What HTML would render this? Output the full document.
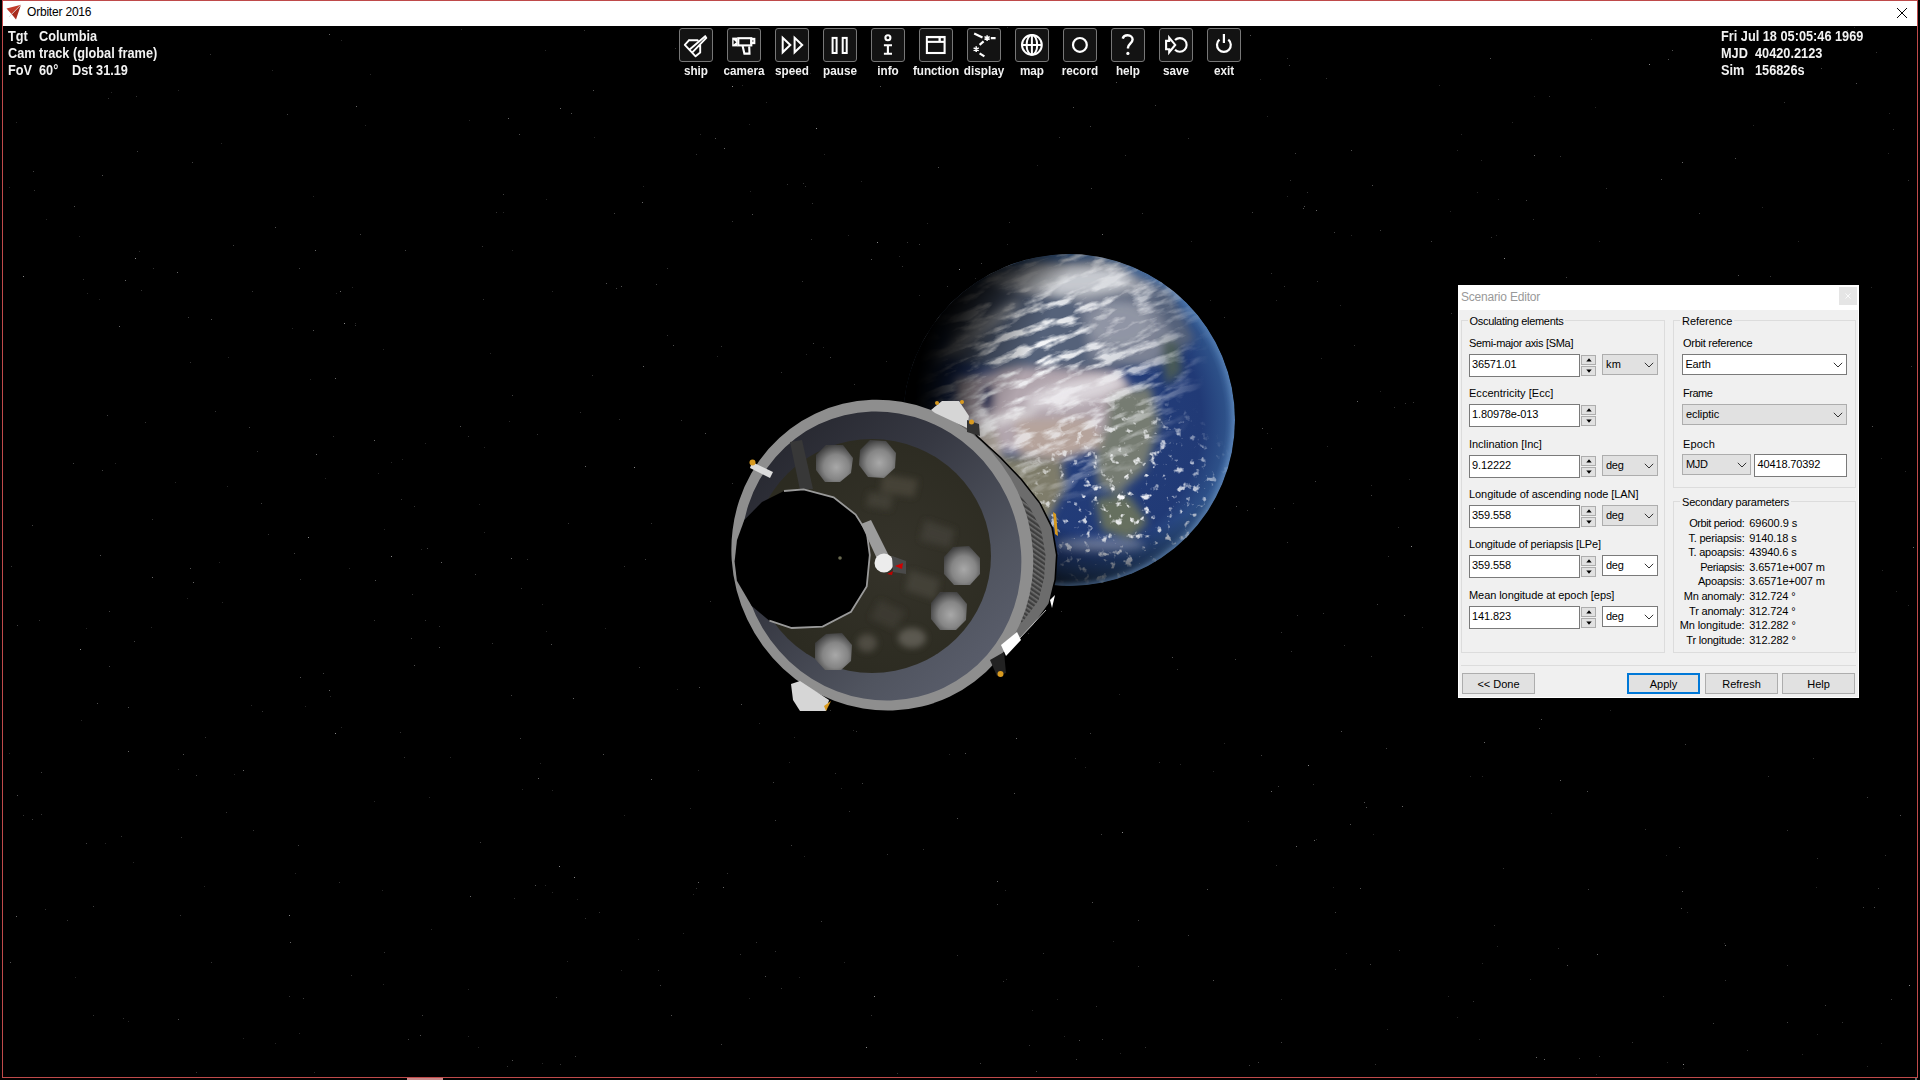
<!DOCTYPE html>
<html><head><meta charset="utf-8">
<style>
*{margin:0;padding:0;box-sizing:border-box}
html,body{width:1920px;height:1080px;overflow:hidden;background:#000}
body{position:relative;font-family:"Liberation Sans",sans-serif}
.a{position:absolute}
.hud{position:absolute;color:#f2f2f2;font:bold 14px/17px "Liberation Sans",sans-serif;white-space:pre;transform:scaleX(0.91);transform-origin:0 0}
.tb{position:absolute;top:28px;width:34px;height:34px;background:#131313;border:1.5px solid #777;border-radius:3px}
.tb svg{position:absolute;left:-1.5px;top:-1.5px;width:34px;height:34px}
.tl{position:absolute;top:63px;width:60px;text-align:center;transform:scaleX(0.9);color:#f2f2f2;font:bold 13px/15px "Liberation Sans",sans-serif;white-space:pre}
.t{position:absolute;font:11px/12px "Liberation Sans",sans-serif;color:#000;white-space:pre;letter-spacing:-0.25px}
.grp{position:absolute;border:1px solid #dcdcdc}
.gt{position:absolute;background:#f0f0f0;padding:0 2px;font:11px/12px "Liberation Sans",sans-serif;white-space:pre;color:#000;letter-spacing:-0.25px}
.ed{position:absolute;background:#fff;border:1px solid #7a7a7a}
.cbg{position:absolute;background:#e1e1e1;border:1px solid #adadad}
.cbw{position:absolute;background:#fff;border:1px solid #7a7a7a}
.sp{position:absolute;background:#e1e1e1;border:1px solid #adadad;width:15px;height:10px}
.btn{position:absolute;background:#e1e1e1;border:1px solid #adadad;font:11px/19px "Liberation Sans",sans-serif;text-align:center;color:#000;padding-top:1px}
</style></head><body>

<!-- window frame -->
<div class="a" style="left:2px;top:0;width:1916px;height:1078px;border:1px solid #bf4a4a"></div>
<div class="a" style="left:3px;top:1px;width:1914px;height:25px;background:#fff"></div>
<div class="a" style="left:407px;top:1078px;width:36px;height:2px;background:#c88c8c"></div>
<div class="a" style="left:1915px;top:1078px;width:2px;height:2px;background:#5f6868"></div>

<!-- STARS -->
<svg class="a" style="left:0;top:0" width="1920" height="1080" viewBox="0 0 1920 1080" shape-rendering="crispEdges">
<path fill="#262626" d="M1867 1066h1v1h-1zM99 299h1v1h-1zM1497 946h1v1h-1zM341 727h1v1h-1zM1005 890h1v1h-1zM638 939h1v1h-1zM794 737h1v1h-1zM949 754h1v1h-1zM243 1038h1v1h-1zM1881 1043h1v1h-1zM313 196h1v1h-1zM479 504h1v1h-1zM542 604h1v1h-1zM824 154h1v1h-1zM431 929h1v1h-1zM700 134h1v1h-1zM1260 79h1v1h-1zM429 797h1v1h-1zM975 278h1v1h-1zM642 202h1v1h-1zM1061 74h1v1h-1zM1085 767h1v1h-1zM750 191h1v1h-1zM468 989h1v1h-1zM352 287h1v1h-1zM272 70h1v1h-1zM402 459h1v1h-1zM1802 1054h1v1h-1zM314 1072h1v1h-1zM310 379h1v1h-1zM221 143h1v1h-1zM1724 943h1v1h-1zM1470 776h1v1h-1zM1371 485h1v1h-1zM1482 776h1v1h-1zM1798 241h1v1h-1zM187 598h1v1h-1zM175 482h1v1h-1zM552 291h1v1h-1zM228 357h1v1h-1zM1380 391h1v1h-1zM79 58h1v1h-1zM1057 999h1v1h-1zM886 361h1v1h-1zM1422 627h1v1h-1zM383 349h1v1h-1zM677 689h1v1h-1zM450 757h1v1h-1zM690 808h1v1h-1zM810 73h1v1h-1zM1293 503h1v1h-1zM1479 1039h1v1h-1zM1667 1062h1v1h-1zM178 90h1v1h-1zM484 447h1v1h-1zM1267 433h1v1h-1zM305 706h1v1h-1zM1276 300h1v1h-1zM128 1021h1v1h-1zM1387 1029h1v1h-1zM1881 458h1v1h-1zM540 763h1v1h-1zM1683 1068h1v1h-1zM234 774h1v1h-1zM251 705h1v1h-1zM522 789h1v1h-1zM1753 125h1v1h-1zM1477 192h1v1h-1zM1871 287h1v1h-1zM853 730h1v1h-1zM1373 834h1v1h-1zM1321 358h1v1h-1zM503 212h1v1h-1zM1180 764h1v1h-1zM1742 71h1v1h-1zM1007 27h1v1h-1zM512 250h1v1h-1zM1482 963h1v1h-1zM1595 107h1v1h-1zM899 256h1v1h-1zM461 29h1v1h-1zM621 970h1v1h-1zM484 532h1v1h-1zM117 71h1v1h-1zM1816 887h1v1h-1zM468 1036h1v1h-1zM1037 165h1v1h-1zM546 631h1v1h-1zM115 463h1v1h-1zM1457 150h1v1h-1zM383 984h1v1h-1zM683 933h1v1h-1zM9 187h1v1h-1zM1687 912h1v1h-1zM1448 996h1v1h-1zM1113 941h1v1h-1zM749 998h1v1h-1zM1666 855h1v1h-1zM75 977h1v1h-1zM1888 153h1v1h-1zM698 770h1v1h-1zM1267 116h1v1h-1zM1896 591h1v1h-1zM1481 160h1v1h-1zM275 1043h1v1h-1zM806 354h1v1h-1zM1119 694h1v1h-1zM546 199h1v1h-1zM605 628h1v1h-1zM552 790h1v1h-1zM384 529h1v1h-1zM79 236h1v1h-1zM86 628h1v1h-1zM1591 39h1v1h-1zM1224 743h1v1h-1zM759 723h1v1h-1zM421 549h1v1h-1zM841 788h1v1h-1zM643 186h1v1h-1zM133 862h1v1h-1zM804 856h1v1h-1zM336 293h1v1h-1zM1316 839h1v1h-1zM1248 821h1v1h-1zM378 473h1v1h-1zM789 762h1v1h-1zM509 421h1v1h-1zM1333 887h1v1h-1zM370 74h1v1h-1zM1006 979h1v1h-1zM87 293h1v1h-1zM1596 1074h1v1h-1zM1340 305h1v1h-1zM139 251h1v1h-1zM1817 1034h1v1h-1zM1409 479h1v1h-1zM567 961h1v1h-1zM1032 1010h1v1h-1zM542 1063h1v1h-1zM766 102h1v1h-1zM349 568h1v1h-1zM1191 241h1v1h-1zM365 125h1v1h-1zM1534 96h1v1h-1zM749 124h1v1h-1zM469 120h1v1h-1zM9 753h1v1h-1zM1210 300h1v1h-1zM1281 999h1v1h-1zM927 223h1v1h-1zM545 50h1v1h-1zM1064 1036h1v1h-1zM1854 27h1v1h-1zM490 353h1v1h-1zM1599 241h1v1h-1zM295 873h1v1h-1zM1530 979h1v1h-1zM1346 953h1v1h-1zM219 562h1v1h-1zM1461 134h1v1h-1zM1882 570h1v1h-1zM1905 471h1v1h-1zM1043 58h1v1h-1zM330 696h1v1h-1zM355 323h1v1h-1zM1439 85h1v1h-1zM1512 122h1v1h-1zM1213 771h1v1h-1zM1551 813h1v1h-1zM425 443h1v1h-1zM1327 446h1v1h-1zM693 894h1v1h-1zM1908 605h1v1h-1zM594 137h1v1h-1zM478 1047h1v1h-1zM1120 1053h1v1h-1zM717 356h1v1h-1zM1496 235h1v1h-1zM1351 235h1v1h-1zM222 602h1v1h-1zM799 977h1v1h-1zM204 886h1v1h-1zM823 347h1v1h-1zM1007 244h1v1h-1zM844 962h1v1h-1zM129 54h1v1h-1zM227 486h1v1h-1zM178 769h1v1h-1zM624 815h1v1h-1zM34 50h1v1h-1zM151 627h1v1h-1zM545 885h1v1h-1zM299 1033h1v1h-1zM341 40h1v1h-1zM861 181h1v1h-1zM742 85h1v1h-1zM105 843h1v1h-1zM16 122h1v1h-1zM1287 196h1v1h-1zM382 890h1v1h-1zM848 235h1v1h-1zM1762 207h1v1h-1zM1498 199h1v1h-1zM111 92h1v1h-1zM1610 710h1v1h-1zM552 892h1v1h-1zM1889 113h1v1h-1zM292 328h1v1h-1zM391 462h1v1h-1zM46 219h1v1h-1zM577 899h1v1h-1zM919 295h1v1h-1zM81 720h1v1h-1zM374 801h1v1h-1zM1450 211h1v1h-1zM1457 1017h1v1h-1zM325 478h1v1h-1z"/>
<path fill="#333" d="M667 335h1v1h-1zM180 915h1v1h-1zM496 212h1v1h-1zM215 411h1v1h-1zM1125 155h1v1h-1zM1271 448h1v1h-1zM957 955h1v1h-1zM153 268h1v1h-1zM1177 669h1v1h-1zM268 534h1v1h-1zM923 849h1v1h-1zM1059 137h1v1h-1zM1787 830h1v1h-1zM811 239h1v1h-1zM1003 981h1v1h-1zM732 483h1v1h-1zM1599 1056h1v1h-1zM468 436h1v1h-1zM400 732h1v1h-1zM1847 30h1v1h-1zM181 837h1v1h-1zM721 346h1v1h-1zM1491 237h1v1h-1zM439 626h1v1h-1zM1271 273h1v1h-1zM1043 953h1v1h-1zM1560 156h1v1h-1zM412 594h1v1h-1zM1096 1006h1v1h-1zM253 830h1v1h-1zM152 519h1v1h-1zM1533 219h1v1h-1zM887 854h1v1h-1zM404 757h1v1h-1zM1138 966h1v1h-1zM41 814h1v1h-1zM1281 632h1v1h-1zM1388 556h1v1h-1zM1413 402h1v1h-1zM1770 276h1v1h-1zM1291 651h1v1h-1zM425 620h1v1h-1zM1451 313h1v1h-1zM11 566h1v1h-1zM775 951h1v1h-1zM1398 527h1v1h-1zM1335 969h1v1h-1zM787 184h1v1h-1zM1061 611h1v1h-1zM39 620h1v1h-1zM1842 1022h1v1h-1zM1399 950h1v1h-1zM856 731h1v1h-1zM803 183h1v1h-1zM897 1073h1v1h-1zM1503 868h1v1h-1zM1323 613h1v1h-1zM527 559h1v1h-1zM492 643h1v1h-1zM1029 1045h1v1h-1zM1558 948h1v1h-1zM1142 213h1v1h-1zM849 811h1v1h-1zM696 154h1v1h-1zM1287 542h1v1h-1zM619 419h1v1h-1zM651 523h1v1h-1zM696 888h1v1h-1zM401 499h1v1h-1zM1224 317h1v1h-1zM1911 366h1v1h-1zM257 451h1v1h-1zM482 246h1v1h-1zM1247 510h1v1h-1zM658 970h1v1h-1zM1606 188h1v1h-1zM136 96h1v1h-1zM483 299h1v1h-1zM537 434h1v1h-1zM580 412h1v1h-1zM507 1066h1v1h-1zM1908 180h1v1h-1zM1632 1042h1v1h-1zM190 362h1v1h-1zM1371 656h1v1h-1zM1813 758h1v1h-1zM835 773h1v1h-1zM355 325h1v1h-1zM226 812h1v1h-1zM93 1015h1v1h-1zM667 268h1v1h-1zM514 898h1v1h-1zM756 942h1v1h-1zM1663 996h1v1h-1zM141 290h1v1h-1zM740 954h1v1h-1zM599 912h1v1h-1zM1075 758h1v1h-1zM300 579h1v1h-1zM1092 78h1v1h-1zM854 384h1v1h-1zM83 279h1v1h-1zM781 988h1v1h-1zM805 186h1v1h-1zM1297 615h1v1h-1zM1579 1058h1v1h-1zM67 920h1v1h-1zM205 737h1v1h-1zM592 375h1v1h-1zM1009 222h1v1h-1zM1307 192h1v1h-1zM732 221h1v1h-1zM812 203h1v1h-1zM1326 78h1v1h-1zM624 566h1v1h-1zM947 286h1v1h-1zM1549 96h1v1h-1zM351 975h1v1h-1zM262 711h1v1h-1zM1028 633h1v1h-1zM1317 281h1v1h-1zM871 1015h1v1h-1zM1276 865h1v1h-1zM675 48h1v1h-1zM333 436h1v1h-1zM211 962h1v1h-1zM1473 1001h1v1h-1zM1313 784h1v1h-1zM1405 403h1v1h-1zM521 588h1v1h-1zM1645 829h1v1h-1zM145 422h1v1h-1zM727 873h1v1h-1zM1394 407h1v1h-1zM1344 645h1v1h-1zM384 952h1v1h-1zM902 266h1v1h-1zM289 996h1v1h-1zM123 1018h1v1h-1zM1725 980h1v1h-1zM196 1072h1v1h-1zM1284 286h1v1h-1zM1768 776h1v1h-1zM585 918h1v1h-1zM830 710h1v1h-1zM560 1064h1v1h-1zM681 420h1v1h-1zM1817 858h1v1h-1zM1784 102h1v1h-1zM210 54h1v1h-1zM45 909h1v1h-1zM1188 138h1v1h-1zM1885 855h1v1h-1zM1354 345h1v1h-1zM1287 58h1v1h-1zM252 291h1v1h-1zM568 523h1v1h-1zM1893 129h1v1h-1zM1145 1047h1v1h-1zM34 190h1v1h-1zM1494 925h1v1h-1zM339 882h1v1h-1zM584 30h1v1h-1zM1747 1050h1v1h-1zM414 506h1v1h-1zM121 836h1v1h-1zM23 815h1v1h-1zM374 620h1v1h-1zM1159 762h1v1h-1zM710 601h1v1h-1zM108 98h1v1h-1zM1787 965h1v1h-1zM1375 1064h1v1h-1zM907 242h1v1h-1zM802 281h1v1h-1zM781 372h1v1h-1zM1876 52h1v1h-1zM1290 180h1v1h-1z"/>
<path fill="#404040" d="M196 775h1v1h-1zM1295 153h1v1h-1zM299 268h1v1h-1zM512 395h1v1h-1zM503 194h1v1h-1zM721 1044h1v1h-1zM556 997h1v1h-1zM137 151h1v1h-1zM862 783h1v1h-1zM656 284h1v1h-1zM520 738h1v1h-1zM1539 728h1v1h-1zM614 213h1v1h-1zM1679 847h1v1h-1zM422 1015h1v1h-1zM1526 200h1v1h-1zM303 998h1v1h-1zM1258 1062h1v1h-1zM1102 1039h1v1h-1zM919 244h1v1h-1zM1335 912h1v1h-1zM33 171h1v1h-1zM1377 604h1v1h-1zM575 1056h1v1h-1zM298 845h1v1h-1zM93 906h1v1h-1zM1076 1059h1v1h-1zM1289 65h1v1h-1zM192 162h1v1h-1zM1380 230h1v1h-1zM188 317h1v1h-1zM249 427h1v1h-1zM109 611h1v1h-1zM1821 68h1v1h-1zM791 845h1v1h-1zM261 503h1v1h-1zM17 625h1v1h-1zM1281 1042h1v1h-1zM1274 508h1v1h-1zM1334 232h1v1h-1zM107 415h1v1h-1zM813 343h1v1h-1zM109 666h1v1h-1zM41 772h1v1h-1zM1278 786h1v1h-1zM1315 481h1v1h-1zM1155 105h1v1h-1zM1036 1071h1v1h-1zM830 357h1v1h-1zM1090 126h1v1h-1zM1101 834h1v1h-1zM773 782h1v1h-1zM639 667h1v1h-1zM32 525h1v1h-1zM1685 744h1v1h-1zM1188 935h1v1h-1zM1249 1065h1v1h-1zM134 641h1v1h-1zM1825 1005h1v1h-1zM1138 920h1v1h-1zM800 699h1v1h-1zM233 245h1v1h-1zM287 114h1v1h-1zM102 470h1v1h-1zM1699 213h1v1h-1zM1431 241h1v1h-1zM511 695h1v1h-1zM405 250h1v1h-1zM821 921h1v1h-1zM294 553h1v1h-1zM832 38h1v1h-1zM1863 907h1v1h-1zM1371 495h1v1h-1zM645 559h1v1h-1zM1566 277h1v1h-1zM1261 755h1v1h-1zM1878 888h1v1h-1zM1386 748h1v1h-1zM475 574h1v1h-1zM997 904h1v1h-1zM1090 733h1v1h-1zM1252 212h1v1h-1zM408 1039h1v1h-1zM1091 188h1v1h-1zM660 985h1v1h-1zM73 463h1v1h-1zM616 288h1v1h-1zM86 843h1v1h-1zM1891 999h1v1h-1zM1867 797h1v1h-1zM1370 964h1v1h-1zM360 234h1v1h-1zM1588 889h1v1h-1zM32 819h1v1h-1zM1713 1023h1v1h-1zM1235 659h1v1h-1zM775 820h1v1h-1zM427 548h1v1h-1zM480 842h1v1h-1zM980 1063h1v1h-1zM323 673h1v1h-1zM1787 1022h1v1h-1zM411 638h1v1h-1zM981 263h1v1h-1z"/>
<path fill="#505050" d="M102 175h1v1h-1zM1092 902h1v1h-1zM1079 1040h1v1h-1zM1372 185h1v1h-1zM938 167h1v1h-1zM1681 908h1v1h-1zM1116 82h1v1h-1zM460 426h1v1h-1zM1341 731h1v1h-1zM1213 980h1v1h-1zM535 885h1v1h-1zM1360 888h1v1h-1zM1250 35h1v1h-1zM671 1015h1v1h-1zM571 113h1v1h-1zM439 647h1v1h-1zM375 580h1v1h-1zM1682 891h1v1h-1zM1303 208h1v1h-1zM705 433h1v1h-1zM715 138h1v1h-1zM1366 807h1v1h-1zM512 1060h1v1h-1zM190 568h1v1h-1zM1350 824h1v1h-1zM1668 59h1v1h-1zM10 962h1v1h-1zM1661 179h1v1h-1zM1404 615h1v1h-1zM1541 719h1v1h-1zM1587 791h1v1h-1zM880 86h1v1h-1zM414 665h1v1h-1zM1364 802h1v1h-1zM957 818h1v1h-1zM1874 907h1v1h-1zM1738 275h1v1h-1zM1672 50h1v1h-1zM871 259h1v1h-1zM621 286h1v1h-1zM1262 428h1v1h-1zM1567 965h1v1h-1zM752 214h1v1h-1zM741 704h1v1h-1zM17 795h1v1h-1zM1090 40h1v1h-1zM1172 657h1v1h-1zM74 206h1v1h-1zM275 227h1v1h-1zM593 90h1v1h-1zM673 345h1v1h-1zM551 644h1v1h-1zM313 330h1v1h-1zM1207 889h1v1h-1zM606 283h1v1h-1zM965 753h1v1h-1zM211 319h1v1h-1zM97 703h1v1h-1zM519 134h1v1h-1zM603 754h1v1h-1zM420 1035h1v1h-1zM1304 206h1v1h-1zM1351 150h1v1h-1zM1073 107h1v1h-1zM128 707h1v1h-1zM1490 58h1v1h-1zM1236 506h1v1h-1zM178 1019h1v1h-1zM183 754h1v1h-1zM1014 793h1v1h-1zM765 976h1v1h-1zM1735 158h1v1h-1zM1856 83h1v1h-1zM100 555h1v1h-1zM300 677h1v1h-1zM1872 426h1v1h-1zM1900 815h1v1h-1zM699 687h1v1h-1z"/>
<path fill="#666" d="M125 280h1v1h-1zM1402 806h1v1h-1zM1102 234h1v1h-1zM538 778h1v1h-1zM1484 742h1v1h-1zM177 272h1v1h-1zM128 751h1v1h-1zM511 558h1v1h-1zM560 108h1v1h-1zM152 577h1v1h-1zM698 882h1v1h-1zM374 440h1v1h-1zM1536 1057h1v1h-1zM642 202h1v1h-1zM329 34h1v1h-1zM1296 846h1v1h-1zM193 582h1v1h-1zM315 250h1v1h-1zM470 896h1v1h-1zM997 881h1v1h-1zM119 326h1v1h-1zM723 887h1v1h-1zM1534 155h1v1h-1zM1725 945h1v1h-1zM16 916h1v1h-1zM335 378h1v1h-1zM1544 1059h1v1h-1zM329 690h1v1h-1zM573 698h1v1h-1zM1682 162h1v1h-1zM1560 780h1v1h-1zM1016 738h1v1h-1zM585 466h1v1h-1zM1357 401h1v1h-1zM340 291h1v1h-1zM316 454h1v1h-1zM1913 547h1v1h-1zM643 366h1v1h-1zM651 779h1v1h-1zM243 770h1v1h-1zM1597 954h1v1h-1zM508 118h1v1h-1zM441 562h1v1h-1zM1314 840h1v1h-1zM1316 210h1v1h-1zM356 106h1v1h-1zM724 148h1v1h-1zM1271 791h1v1h-1zM290 942h1v1h-1z"/>
<path fill="#888" d="M816 128h1v1h-1zM574 877h1v1h-1zM732 86h1v1h-1zM289 915h1v1h-1zM135 258h1v1h-1zM1649 64h1v1h-1zM1122 832h1v1h-1zM634 467h1v1h-1zM1308 765h1v1h-1zM959 269h1v1h-1zM1683 1064h1v1h-1zM308 537h1v1h-1zM874 996h1v1h-1zM1909 985h1v1h-1zM80 649h1v1h-1zM1504 258h1v1h-1zM877 242h1v1h-1zM866 1047h1v1h-1zM559 866h1v1h-1zM335 733h1v1h-1zM391 556h1v1h-1zM1411 546h1v1h-1zM23 276h1v1h-1zM344 323h1v1h-1z"/>
</svg>
<!-- /STARS -->
<!-- SCENE -->
<svg class="a" style="left:700px;top:240px" width="560" height="490" viewBox="700 240 560 490">
<defs>
  <radialGradient id="ocean" cx="1069" cy="420" r="166" gradientUnits="userSpaceOnUse">
    <stop offset="0" stop-color="#253f7c"/>
    <stop offset="0.8" stop-color="#213a76"/>
    <stop offset="0.94" stop-color="#2d5088"/>
    <stop offset="1" stop-color="#4a74aa"/>
  </radialGradient>
  <radialGradient id="night" cx="1112" cy="405" r="212" gradientUnits="userSpaceOnUse">
    <stop offset="0.62" stop-color="#000" stop-opacity="0"/>
    <stop offset="0.80" stop-color="#000" stop-opacity="0.55"/>
    <stop offset="0.93" stop-color="#000" stop-opacity="1"/>
  </radialGradient>
  <radialGradient id="cdens" cx="1045" cy="345" r="165" gradientUnits="userSpaceOnUse">
    <stop offset="0" stop-color="#fff"/><stop offset="0.6" stop-color="#aaa"/><stop offset="1" stop-color="#000"/>
  </radialGradient>
  <radialGradient id="cdens2" cx="1125" cy="500" r="115" gradientUnits="userSpaceOnUse">
    <stop offset="0" stop-color="#fff"/><stop offset="0.7" stop-color="#aaa"/><stop offset="1" stop-color="#000"/>
  </radialGradient>
  <linearGradient id="night2" x1="905" y1="335" x2="1020" y2="385" gradientUnits="userSpaceOnUse">
    <stop offset="0" stop-color="#000" stop-opacity="0.9"/>
    <stop offset="0.55" stop-color="#000" stop-opacity="0.45"/>
    <stop offset="1" stop-color="#000" stop-opacity="0"/>
  </linearGradient>
  <filter id="clouds" x="0" y="0" width="100%" height="100%">
    <feTurbulence type="fractalNoise" baseFrequency="0.035 0.11" numOctaves="4" seed="11" result="n"/>
    <feColorMatrix in="n" type="matrix" values="0 0 0 0 0.93  0 0 0 0 0.94  0 0 0 0 0.96  4.0 0 0 0 -1.85"/>
  </filter>
  <filter id="clouds2" x="0" y="0" width="100%" height="100%">
    <feTurbulence type="fractalNoise" baseFrequency="0.12" numOctaves="3" seed="5" result="n"/>
    <feColorMatrix in="n" type="matrix" values="0 0 0 0 0.95  0 0 0 0 0.96  0 0 0 0 0.98  6.5 0 0 0 -3.95"/>
  </filter>
  <filter id="b6" x="-50%" y="-50%" width="200%" height="200%"><feGaussianBlur stdDeviation="6"/></filter>
  <filter id="b2" x="-50%" y="-50%" width="200%" height="200%"><feGaussianBlur stdDeviation="2"/></filter>
  <filter id="b4" x="-50%" y="-50%" width="200%" height="200%"><feGaussianBlur stdDeviation="4"/></filter>
  <linearGradient id="rimg" x1="903" y1="254" x2="1235" y2="586" gradientUnits="userSpaceOnUse"><stop offset="0.45" stop-color="#6a92c4" stop-opacity="0"/><stop offset="0.8" stop-color="#6a92c4" stop-opacity="0.55"/></linearGradient>
  <filter id="b3" x="-50%" y="-50%" width="200%" height="200%"><feGaussianBlur stdDeviation="3"/></filter>
  <filter id="b10" x="-50%" y="-50%" width="200%" height="200%"><feGaussianBlur stdDeviation="10"/></filter>
  <clipPath id="earthclip"><circle cx="1069" cy="420" r="166"/></clipPath>
  <linearGradient id="wall" x1="830" y1="405" x2="940" y2="705" gradientUnits="userSpaceOnUse">
    <stop offset="0" stop-color="#272830"/>
    <stop offset="0.35" stop-color="#363842"/>
    <stop offset="0.75" stop-color="#50545f"/>
    <stop offset="1" stop-color="#5a5e6c"/>
  </linearGradient>
  <radialGradient id="inner" cx="0.6" cy="0.5" r="0.55">
    <stop offset="0" stop-color="#35332a"/>
    <stop offset="1" stop-color="#2c2b21"/>
  </radialGradient>
  <radialGradient id="sph" cx="0.55" cy="0.6" r="0.62">
    <stop offset="0" stop-color="#a8a8a8"/>
    <stop offset="0.55" stop-color="#858585"/>
    <stop offset="1" stop-color="#3e3e3e"/>
  </radialGradient>
  <pattern id="ribs" width="4" height="4" patternUnits="userSpaceOnUse" patternTransform="rotate(35)">
    <rect width="4" height="4" fill="#3e3e3e"/><rect width="4" height="1.6" fill="#6e6e6e"/>
  </pattern>
</defs>

<!-- EARTH -->
<g clip-path="url(#earthclip)">
  <circle cx="1069" cy="420" r="166" fill="url(#ocean)"/>
  <g filter="url(#b4)">
    <path d="M945 300 L1010 268 L1100 258 L1170 290 L1195 340 L1160 365 L1090 372 L1010 372 L950 360 Z" fill="#55627a"/>
    <path d="M1030 262 L1120 262 L1150 290 L1080 300 L1020 290 Z" fill="#9a9ea8"/>
    <path d="M1080 300 L1150 300 L1175 340 L1150 365 L1090 360 Z" fill="#7c8294"/>
    <path d="M955 378 L1020 368 L1120 372 L1145 405 L1115 445 L1065 458 L1010 452 L955 440 Z" fill="#b2a6ae"/>
    <path d="M1015 420 L1090 418 L1105 445 L1065 460 L1020 455 Z" fill="#b6a49c"/>
    <path d="M935 420 L995 428 L1010 480 L965 492 L935 470 Z" fill="#a39b92"/>
    <path d="M1000 455 L1062 460 L1066 487 L1046 526 L1026 526 L1002 482 Z" fill="#7e7c6a"/>
    <path d="M1110 395 L1150 385 L1160 425 L1145 470 L1117 495 L1098 485 L1095 455 L1105 430 Z" fill="#767c72"/>
    <path d="M1095 498 L1128 494 L1148 522 L1130 540 L1102 530 Z" fill="#66705e"/>
    <path d="M1162 338 L1178 342 L1182 372 L1166 385 Z" fill="#4a5a56"/>
    <ellipse cx="987" cy="398" rx="7" ry="15" fill="#2c3660"/>
  </g>
  <mask id="cmask"><rect x="900" y="250" width="340" height="340" fill="url(#cdens)"/></mask>
  <g mask="url(#cmask)"><rect x="850" y="200" width="440" height="440" filter="url(#clouds)" transform="rotate(-20 1069 420)"/></g>
  <mask id="cmask2"><rect x="900" y="250" width="340" height="340" fill="url(#cdens2)"/></mask>
  <rect x="900" y="250" width="340" height="340" filter="url(#clouds2)" mask="url(#cmask2)"/>
  <g filter="url(#b4)" opacity="0.7">
    <ellipse cx="1060" cy="280" rx="70" ry="14" fill="#d9dbe0"/>
    <ellipse cx="1120" cy="325" rx="30" ry="22" fill="#d0d3db" opacity="0.35"/>
    <ellipse cx="975" cy="332" rx="55" ry="6" fill="#e0e0e0" transform="rotate(-35 975 332)"/>
    <ellipse cx="1075" cy="392" rx="50" ry="12" fill="#ebe8ec" transform="rotate(-12 1075 392)"/>
    <ellipse cx="1000" cy="420" rx="40" ry="5" fill="#eeeeee" transform="rotate(-15 1000 420)"/>
    <ellipse cx="1100" cy="545" rx="45" ry="7" fill="#e4e8ee" opacity="0.6"/>
  </g>
  <rect x="890" y="240" width="360" height="360" fill="url(#night)"/>
  <rect x="890" y="240" width="360" height="360" fill="url(#night2)"/>
  <circle cx="1069" cy="420" r="166" fill="none" stroke="url(#rimg)" stroke-width="5" filter="url(#b2)"/>
</g>

<!-- SPACECRAFT -->
<path d="M973.0 430.0 L978.0 436.0 L1001.0 457.0 L1022.0 479.0 L1040.7 503.0 L1053.0 527.6 L1057.5 555.0 L1056.0 579.6 L1050.0 604.0 L1034.6 625.5 L1019.0 641.0 L1012.0 648.0 L960.0 600.0 L940.0 520.0 L955.0 440.0 Z" fill="#000"/>
<path d="M972.1 431.3 L977.0 437.2 L999.8 458.0 L1020.6 479.8 L1039.2 503.5 L1051.4 527.9 L1055.9 555.0 L1054.4 579.4 L1048.5 603.6 L1033.1 624.8 L1017.6 640.1 L1010.7 647.1 L960.0 600.0 L940.0 520.0 L955.0 440.0 Z" fill="#6c6c6c"/>
<path d="M965.9 439.7 L970.5 445.3 L991.7 464.6 L1011.5 484.7 L1029.3 506.7 L1041.2 529.5 L1045.5 555.0 L1044.1 577.9 L1038.5 600.6 L1023.7 620.5 L1008.8 634.6 L1002.2 641.0 L960.0 600.0 L940.0 520.0 L955.0 440.0 Z" fill="url(#ribs)"/>
<g transform="rotate(-25.4 882.3 555.2)">
  <ellipse cx="882.3" cy="555.2" rx="149.6" ry="156.7" fill="#8e8e8e"/>
  <ellipse cx="881" cy="555.5" rx="138.8" ry="145.8" fill="url(#wall)"/>
</g>
<ellipse cx="872" cy="556" rx="119" ry="117" fill="url(#inner)"/>
<!-- inner texture -->
<g filter="url(#b3)" opacity="0.75">
  <path d="M883 474 L918 480 L914 497 L880 492 Z" fill="#4e4a3e"/>
  <path d="M869 492 L893 496 L890 510 L866 506 Z" fill="#47443a"/>
  <path d="M925 520 L955 530 L950 548 L920 540 Z" fill="#45423a"/>
  <path d="M910 570 L940 580 L935 600 L905 590 Z" fill="#4a463c"/>
  <ellipse cx="912" cy="638" rx="14" ry="10" fill="#6a675e"/>
  <ellipse cx="867" cy="643" rx="10" ry="9" fill="#5a574e"/>
  <path d="M880 600 L905 612 L895 630 L870 618 Z" fill="#3f3c34"/>
</g>
<!-- strut -->
<path d="M790 442 L802 440 L813 489 L800 490 Z" fill="#383838"/>
<!-- black hole -->
<path d="M734.6 561.5 L736.9 580.7 L751.7 606 L769.4 620.7 L791.7 628 L822.6 626.6 L851 611.7 L866.7 586.5 L869.8 555 L866.7 532 L855.6 514.6 L833.6 497.3 L803.7 489.4 L784 491 L762 502 L744.3 520 L737 540 Z" fill="#000"/>
<path d="M784 491 L803.7 489.4 L833.6 497.3 L855.6 514.6 L866.7 532 L869.8 555 L866.7 586.5 L851 611.7 L822.6 626.6 L791.7 628 L769.4 620.7" fill="none" stroke="#9a9a9a" stroke-width="1.8"/>
<circle cx="840" cy="558" r="1.8" fill="#6a6a50"/>
<!-- white nozzle in middle -->
<path d="M861 524 L871 520 L889 556 L879 563 Z" fill="#9c9c9c"/>
<circle cx="884" cy="563" r="9.5" fill="#ececec"/>
<path d="M892 556 L906 561 L906 574 L893 572 Z" fill="#4a4a4a"/>
<path d="M895 566 L903 563 L902 569 Z" fill="#d00000"/>
<path d="M887 574 L893 571 L892 575 Z" fill="#c00000"/>
<!-- spheres -->
<g fill="url(#sph)">
  <path d="M826 445 L843 445 L853 458 L851 473 L840 482 L825 482 L816 470 L816 455 Z"/>
  <path d="M870 440 L886 441 L896 453 L895 468 L884 478 L868 477 L859 465 L860 450 Z"/>
  <path d="M953 547 L969 546 L980 558 L980 574 L970 585 L954 585 L944 574 L944 557 Z"/>
  <path d="M940 592 L957 592 L967 604 L966 620 L956 630 L940 630 L931 619 L931 603 Z"/>
  <path d="M826 634 L842 633 L852 645 L851 661 L841 670 L825 670 L815 659 L815 643 Z"/>
</g>
<!-- white modules -->
<path d="M931 410 L942 401 L959 401 L969 416 L967 428 L935 413 Z" fill="#d6d6d6"/>
<path d="M967 420 L979 424 L980 436 L967 432 Z" fill="#333"/>
<circle cx="971.5" cy="422" r="2.5" fill="#d89a20"/>
<circle cx="937" cy="403" r="2" fill="#d89a20"/>
<circle cx="962" cy="402" r="2" fill="#d89a20"/>
<path d="M791 684 L800 681 L829 700 L826 711 L800 711 L793 700 Z" fill="#d6d6d6"/>
<path d="M824 706 L831 701 L826 711 Z" fill="#d89a20"/>
<path d="M1001 645 L1017 632 L1021 640 L1006 656 Z" fill="#fff"/>
<path d="M990 660 L1004 652 L1006 673 L997 676 Z" fill="#222"/>
<circle cx="1000.5" cy="674" r="3" fill="#d89a20"/>
<path d="M1020 638 L1046 610" stroke="#bbb" stroke-width="1"/>
<path d="M752 462 L773 472 L770 478 L750 468 Z" fill="#dcdcdc"/>
<circle cx="752.5" cy="462.5" r="3" fill="#d89a20"/>
<path d="M1053 512 L1056 514 L1058 536 L1055 534 Z" fill="#d89a20"/>
<path d="M1050 600 L1055 595 L1052 608 Z" fill="#fff"/>
</svg>
<!-- /SCENE -->

<!-- title -->
<svg class="a" style="left:5px;top:4px" width="18" height="18" viewBox="0 0 18 18">
  <path d="M1.5 4.5 L16 0.8 L6.5 10 Z" fill="#c23b2a"/>
  <path d="M6.5 10 L16 0.8 L11 15.5 Z" fill="#a82c1e"/>
  <path d="M4 13 L16 0.8" stroke="#d8d8d8" stroke-width="1" opacity="0.8"/>
</svg>
<div class="a" style="left:27px;top:5px;font:12px/14px 'Liberation Sans',sans-serif;color:#000;white-space:pre;letter-spacing:-0.2px">Orbiter 2016</div>
<svg class="a" style="left:1896px;top:7px" width="12" height="12" viewBox="0 0 12 12"><path d="M1 1 L11 11 M11 1 L1 11" stroke="#000" stroke-width="1"/></svg>

<!-- HUD left -->
<div class="hud" style="left:7.5px;top:28px">Tgt</div>
<div class="hud" style="left:39px;top:28px">Columbia</div>
<div class="hud" style="left:7.5px;top:45px">Cam</div>
<div class="hud" style="left:39px;top:45px">track (global frame)</div>
<div class="hud" style="left:7.5px;top:62px">FoV</div>
<div class="hud" style="left:39px;top:62px">60°</div>
<div class="hud" style="left:72px;top:62px">Dst 31.19</div>
<!-- HUD right -->
<div class="hud" style="left:1721px;top:28px">Fri Jul 18 05:05:46 1969</div>
<div class="hud" style="left:1721px;top:45px">MJD</div>
<div class="hud" style="left:1755px;top:45px">40420.2123</div>
<div class="hud" style="left:1721px;top:62px">Sim</div>
<div class="hud" style="left:1755px;top:62px">156826s</div>

<!-- TOOLBAR -->
<div class="tb" style="left:679px"><svg viewBox="0 0 34 34" fill="none" stroke="#fff" stroke-width="1.9" stroke-linejoin="round" stroke-linecap="round">
 <path d="M9.9 12.3 H18.6 M5.8 16.9 L9.9 12.3 M5.8 16.9 L16.6 28.3 L21.2 24.6 V16.5 M10.9 21.3 L26.2 8.2 M13.6 24.1 L27.3 9.9 M26.2 8.2 L27.3 9.9"/>
</svg></div>
<div class="tl" style="left:666px">ship</div>

<div class="tb" style="left:727px"><svg viewBox="0 0 34 34" fill="none" stroke="#fff" stroke-width="2.1" stroke-linejoin="miter">
 <rect x="11.3" y="10.2" width="13" height="7.2"/>
 <rect x="5.2" y="9.6" width="5.3" height="8.8" fill="#fff" stroke="none"/>
 <path d="M6.6 11.8 L9.3 14.2 L6.6 16.6 Z" fill="#131313" stroke="none"/>
 <rect x="24.3" y="10.9" width="3" height="4.2"/>
 <path d="M15.5 17.4 L17.4 25.6 L22.5 25.6 L22.2 18.4"/>
</svg></div>
<div class="tl" style="left:714px">camera</div>

<div class="tb" style="left:775px"><svg viewBox="0 0 34 34" fill="none" stroke="#fff" stroke-width="2" stroke-linejoin="miter">
 <path d="M7.7 9.8 L15.3 16.9 L7.7 24.3 Z"/>
 <path d="M19.6 9.8 L27.2 16.9 L19.6 24.3 Z"/>
</svg></div>
<div class="tl" style="left:762px">speed</div>

<div class="tb" style="left:823px"><svg viewBox="0 0 34 34" fill="none" stroke="#fff" stroke-width="2">
 <rect x="9.6" y="9.9" width="4" height="15.1"/>
 <rect x="19.7" y="9.9" width="4" height="15.1"/>
</svg></div>
<div class="tl" style="left:810px">pause</div>

<div class="tb" style="left:871px"><svg viewBox="0 0 34 34" fill="none" stroke="#fff" stroke-width="2.1">
 <circle cx="16.9" cy="9.8" r="2.5"/>
 <path d="M12.9 17.2 H21 M16.9 17.2 V25.8 M12.9 25.8 H21"/>
</svg></div>
<div class="tl" style="left:858px">info</div>

<div class="tb" style="left:919px"><svg viewBox="0 0 34 34" fill="none" stroke="#fff" stroke-width="2.1">
 <rect x="7.9" y="9" width="17.7" height="16"/>
 <rect x="7.9" y="8.5" width="17.7" height="6.4" fill="#fff" stroke="none"/>
 <rect x="8.8" y="10.2" width="10.7" height="2.6" fill="#131313" stroke="none"/>
 <rect x="21.8" y="10.2" width="2.8" height="2.6" fill="#131313" stroke="none"/>
</svg></div>
<div class="tl" style="left:906px">function</div>

<div class="tb" style="left:967px"><svg viewBox="0 0 34 34" fill="none" stroke="#fff" stroke-width="2.2" stroke-linecap="butt">
 <path d="M7.2 5.6 L15.5 9.5 M23.8 10.2 H28.6 M12.6 16.8 L16.6 13.4 M12.6 25.3 L17.4 28.4"/>
 <g stroke-width="1.5"><path d="M20.1 7.2 V13 M17.5 8.7 L22.7 11.5 M17.5 11.5 L22.7 8.7"/>
 <path d="M9.2 18.3 V24.1 M6.6 19.8 L11.8 22.6 M6.6 22.6 L11.8 19.8"/></g>
</svg></div>
<div class="tl" style="left:954px">display</div>

<div class="tb" style="left:1015px"><svg viewBox="0 0 34 34" fill="none" stroke="#fff" stroke-width="2">
 <circle cx="16.9" cy="16.9" r="9.9"/>
 <ellipse cx="16.9" cy="16.9" rx="5.3" ry="9.9"/>
 <path d="M16.9 7 V26.8 M7 16.9 H26.8"/>
</svg></div>
<div class="tl" style="left:1002px">map</div>

<div class="tb" style="left:1063px"><svg viewBox="0 0 34 34" fill="none" stroke="#fff" stroke-width="2.2">
 <circle cx="16.9" cy="16.9" r="6.9"/>
</svg></div>
<div class="tl" style="left:1050px">record</div>

<div class="tb" style="left:1111px"><svg viewBox="0 0 34 34" fill="none" stroke="#fff" stroke-width="2.4">
 <path d="M11.7 10.6 C12.4 8.2 14.5 7.3 16.6 7.3 C19.6 7.3 21.6 9.3 21.6 11.6 C21.6 15.2 17 16.1 17 19.6 V20.6"/>
 <circle cx="16.9" cy="25.4" r="1.6" fill="#fff" stroke="none"/>
</svg></div>
<div class="tl" style="left:1098px">help</div>

<div class="tb" style="left:1159px"><svg viewBox="0 0 34 34" fill="none" stroke="#fff" stroke-width="2.1" stroke-linejoin="miter">
 <path d="M7.1 12.9 H10.2 V9.7 L16.2 16.9 L10.2 24.2 V21.2 H7.1 Z"/>
 <path d="M16.0 12.1 A6.8 6.8 0 1 1 16.0 21.7"/>
</svg></div>
<div class="tl" style="left:1146px">save</div>

<div class="tb" style="left:1207px"><svg viewBox="0 0 34 34" fill="none" stroke="#fff" stroke-width="2.2">
 <path d="M12.5 11.6 A6.9 6.9 0 1 0 21.3 11.6"/>
 <path d="M16.9 6 V15"/>
</svg></div>
<div class="tl" style="left:1194px">exit</div>


<!-- DIALOG -->
<div class="a" style="left:1458px;top:285px;width:401px;height:413px;background:#fff"></div>
<div class="a" style="left:1459px;top:310px;width:399px;height:387px;background:#f0f0f0"></div>
<div class="a" style="left:1461px;top:289.6px;font:12px/14px 'Liberation Sans',sans-serif;color:#999;white-space:pre;letter-spacing:-0.2px">Scenario Editor</div>
<div class="a" style="left:1839px;top:287px;width:18px;height:18px;background:#e5e5e5"></div>
<svg class="a" style="left:1845px;top:293px" width="6" height="6" viewBox="0 0 6 6"><path d="M0.5 0.5 L5.5 5.5 M5.5 0.5 L0.5 5.5" stroke="#fafafa" stroke-width="1"/></svg>
<div class="grp" style="left:1461px;top:320px;width:204px;height:333px"></div>
<div class="grp" style="left:1673px;top:320px;width:183px;height:168px"></div>
<div class="grp" style="left:1673px;top:501px;width:183px;height:152px"></div>
<div class="gt" style="left:1467.5px;top:314.6px;letter-spacing:-0.3px">Osculating elements</div>
<div class="gt" style="left:1680px;top:314.5px;letter-spacing:-0.05px">Reference</div>
<div class="gt" style="left:1680px;top:496.2px;letter-spacing:-0.21px">Secondary parameters</div>
<div class="t" style="left:1469px;top:337.2px;letter-spacing:-0.31px;">Semi-major axis [SMa]</div>
<div class="ed" style="left:1469px;top:354px;width:111px;height:23px"></div>
<div class="t" style="left:1472px;top:357.5px;letter-spacing:-0.17px;">36571.01</div>
<div class="sp" style="left:1581px;top:355px"></div>
<div class="sp" style="left:1581px;top:366px"></div>
<svg class="a" style="left:1586px;top:358px" width="6" height="4" viewBox="0 0 6 4"><path d="M3 0.3 L5.7 3.5 L0.3 3.5 Z" fill="#000"/></svg>
<svg class="a" style="left:1586px;top:369px" width="6" height="4" viewBox="0 0 6 4"><path d="M0.3 0.5 L5.7 0.5 L3 3.7 Z" fill="#000"/></svg>
<div class="cbg" style="left:1602px;top:354px;width:56px;height:21px"></div>
<div class="t" style="left:1606px;top:357.6px;letter-spacing:0.3px;">km</div>
<svg class="a" style="left:1644px;top:362px" width="10" height="6" viewBox="0 0 10 6"><path d="M0.8 0.8 L5 5 L9.2 0.8" fill="none" stroke="#333" stroke-width="1"/></svg>
<div class="t" style="left:1469px;top:387.2px;letter-spacing:0.03px;">Eccentricity [Ecc]</div>
<div class="ed" style="left:1469px;top:404px;width:111px;height:23px"></div>
<div class="t" style="left:1472px;top:407.5px;letter-spacing:-0.13px;">1.80978e-013</div>
<div class="sp" style="left:1581px;top:405px"></div>
<div class="sp" style="left:1581px;top:416px"></div>
<svg class="a" style="left:1586px;top:408px" width="6" height="4" viewBox="0 0 6 4"><path d="M3 0.3 L5.7 3.5 L0.3 3.5 Z" fill="#000"/></svg>
<svg class="a" style="left:1586px;top:419px" width="6" height="4" viewBox="0 0 6 4"><path d="M0.3 0.5 L5.7 0.5 L3 3.7 Z" fill="#000"/></svg>
<div class="t" style="left:1469px;top:438.2px;letter-spacing:-0.03px;">Inclination [Inc]</div>
<div class="ed" style="left:1469px;top:455px;width:111px;height:23px"></div>
<div class="t" style="left:1472px;top:458.5px;letter-spacing:-0.12px;">9.12222</div>
<div class="sp" style="left:1581px;top:456px"></div>
<div class="sp" style="left:1581px;top:467px"></div>
<svg class="a" style="left:1586px;top:459px" width="6" height="4" viewBox="0 0 6 4"><path d="M3 0.3 L5.7 3.5 L0.3 3.5 Z" fill="#000"/></svg>
<svg class="a" style="left:1586px;top:470px" width="6" height="4" viewBox="0 0 6 4"><path d="M0.3 0.5 L5.7 0.5 L3 3.7 Z" fill="#000"/></svg>
<div class="cbg" style="left:1602px;top:455px;width:56px;height:21px"></div>
<div class="t" style="left:1606px;top:458.6px;letter-spacing:-0.3px;">deg</div>
<svg class="a" style="left:1644px;top:463px" width="10" height="6" viewBox="0 0 10 6"><path d="M0.8 0.8 L5 5 L9.2 0.8" fill="none" stroke="#333" stroke-width="1"/></svg>
<div class="t" style="left:1469px;top:488.2px;letter-spacing:-0.075px;">Longitude of ascending node [LAN]</div>
<div class="ed" style="left:1469px;top:505px;width:111px;height:23px"></div>
<div class="t" style="left:1472px;top:508.5px;letter-spacing:-0.12px;">359.558</div>
<div class="sp" style="left:1581px;top:506px"></div>
<div class="sp" style="left:1581px;top:517px"></div>
<svg class="a" style="left:1586px;top:509px" width="6" height="4" viewBox="0 0 6 4"><path d="M3 0.3 L5.7 3.5 L0.3 3.5 Z" fill="#000"/></svg>
<svg class="a" style="left:1586px;top:520px" width="6" height="4" viewBox="0 0 6 4"><path d="M0.3 0.5 L5.7 0.5 L3 3.7 Z" fill="#000"/></svg>
<div class="cbg" style="left:1602px;top:505px;width:56px;height:21px"></div>
<div class="t" style="left:1606px;top:508.6px;letter-spacing:-0.3px;">deg</div>
<svg class="a" style="left:1644px;top:513px" width="10" height="6" viewBox="0 0 10 6"><path d="M0.8 0.8 L5 5 L9.2 0.8" fill="none" stroke="#333" stroke-width="1"/></svg>
<div class="t" style="left:1469px;top:538.2px;letter-spacing:-0.16px;">Longitude of periapsis [LPe]</div>
<div class="ed" style="left:1469px;top:555px;width:111px;height:23px"></div>
<div class="t" style="left:1472px;top:558.5px;letter-spacing:-0.12px;">359.558</div>
<div class="sp" style="left:1581px;top:556px"></div>
<div class="sp" style="left:1581px;top:567px"></div>
<svg class="a" style="left:1586px;top:559px" width="6" height="4" viewBox="0 0 6 4"><path d="M3 0.3 L5.7 3.5 L0.3 3.5 Z" fill="#000"/></svg>
<svg class="a" style="left:1586px;top:570px" width="6" height="4" viewBox="0 0 6 4"><path d="M0.3 0.5 L5.7 0.5 L3 3.7 Z" fill="#000"/></svg>
<div class="cbw" style="left:1602px;top:555px;width:56px;height:21px"></div>
<div class="t" style="left:1606px;top:558.6px;letter-spacing:-0.3px;">deg</div>
<svg class="a" style="left:1644px;top:563px" width="10" height="6" viewBox="0 0 10 6"><path d="M0.8 0.8 L5 5 L9.2 0.8" fill="none" stroke="#333" stroke-width="1"/></svg>
<div class="t" style="left:1469px;top:589.2px;letter-spacing:-0.07px;">Mean longitude at epoch [eps]</div>
<div class="ed" style="left:1469px;top:606px;width:111px;height:23px"></div>
<div class="t" style="left:1472px;top:609.5px;letter-spacing:-0.12px;">141.823</div>
<div class="sp" style="left:1581px;top:607px"></div>
<div class="sp" style="left:1581px;top:618px"></div>
<svg class="a" style="left:1586px;top:610px" width="6" height="4" viewBox="0 0 6 4"><path d="M3 0.3 L5.7 3.5 L0.3 3.5 Z" fill="#000"/></svg>
<svg class="a" style="left:1586px;top:621px" width="6" height="4" viewBox="0 0 6 4"><path d="M0.3 0.5 L5.7 0.5 L3 3.7 Z" fill="#000"/></svg>
<div class="cbw" style="left:1602px;top:606px;width:56px;height:21px"></div>
<div class="t" style="left:1606px;top:609.6px;letter-spacing:-0.3px;">deg</div>
<svg class="a" style="left:1644px;top:614px" width="10" height="6" viewBox="0 0 10 6"><path d="M0.8 0.8 L5 5 L9.2 0.8" fill="none" stroke="#333" stroke-width="1"/></svg>
<div class="t" style="left:1683px;top:337.2px;letter-spacing:-0.27px;">Orbit reference</div>
<div class="cbw" style="left:1682px;top:354px;width:165px;height:21px"></div>
<div class="t" style="left:1685.5px;top:357.8px;letter-spacing:-0.25px;">Earth</div>
<svg class="a" style="left:1833px;top:362px" width="10" height="6" viewBox="0 0 10 6"><path d="M0.8 0.8 L5 5 L9.2 0.8" fill="none" stroke="#333" stroke-width="1"/></svg>
<div class="t" style="left:1683px;top:386.9px;letter-spacing:-0.5px;">Frame</div>
<div class="cbg" style="left:1682px;top:404px;width:165px;height:21px"></div>
<div class="t" style="left:1686px;top:407.8px;letter-spacing:-0.07px;">ecliptic</div>
<svg class="a" style="left:1833px;top:412px" width="10" height="6" viewBox="0 0 10 6"><path d="M0.8 0.8 L5 5 L9.2 0.8" fill="none" stroke="#333" stroke-width="1"/></svg>
<div class="t" style="left:1683px;top:437.8px;letter-spacing:0.15px;">Epoch</div>
<div class="cbg" style="left:1682px;top:454px;width:69px;height:21px"></div>
<div class="t" style="left:1686px;top:457.8px;letter-spacing:-0.3px;">MJD</div>
<svg class="a" style="left:1737px;top:462px" width="10" height="6" viewBox="0 0 10 6"><path d="M0.8 0.8 L5 5 L9.2 0.8" fill="none" stroke="#333" stroke-width="1"/></svg>
<div class="ed" style="left:1754px;top:454px;width:93px;height:23px"></div>
<div class="t" style="left:1757.5px;top:457.8px;letter-spacing:-0.14px;">40418.70392</div>
<div class="t" style="left:1624px;width:120.5px;text-align:right;top:517.1px;letter-spacing:-0.4px">Orbit period:</div>
<div class="t" style="left:1749.3px;top:517.1px;letter-spacing:-0.05px;">69600.9 s</div>
<div class="t" style="left:1624px;width:120.5px;text-align:right;top:531.7px;letter-spacing:-0.2px">T. periapsis:</div>
<div class="t" style="left:1749.3px;top:531.7px;letter-spacing:-0.12px;">9140.18 s</div>
<div class="t" style="left:1624px;width:120.5px;text-align:right;top:546.2px;letter-spacing:-0.2px">T. apoapsis:</div>
<div class="t" style="left:1749.3px;top:546.2px;letter-spacing:-0.12px;">43940.6 s</div>
<div class="t" style="left:1624px;width:120.5px;text-align:right;top:560.8px;letter-spacing:-0.4px">Periapsis:</div>
<div class="t" style="left:1749.3px;top:560.8px;letter-spacing:-0.09px;">3.6571e+007 m</div>
<div class="t" style="left:1624px;width:120.5px;text-align:right;top:575.4px;letter-spacing:-0.2px">Apoapsis:</div>
<div class="t" style="left:1749.3px;top:575.4px;letter-spacing:-0.09px;">3.6571e+007 m</div>
<div class="t" style="left:1624px;width:120.5px;text-align:right;top:590.0px;letter-spacing:-0.2px">Mn anomaly:</div>
<div class="t" style="left:1749.3px;top:590.0px;letter-spacing:-0.12px;">312.724 °</div>
<div class="t" style="left:1624px;width:120.5px;text-align:right;top:604.5px;letter-spacing:-0.2px">Tr anomaly:</div>
<div class="t" style="left:1749.3px;top:604.5px;letter-spacing:-0.12px;">312.724 °</div>
<div class="t" style="left:1624px;width:120.5px;text-align:right;top:619.1px;letter-spacing:-0.09px">Mn longitude:</div>
<div class="t" style="left:1749.3px;top:619.1px;letter-spacing:-0.07px;">312.282 °</div>
<div class="t" style="left:1624px;width:120.5px;text-align:right;top:633.7px;letter-spacing:-0.2px">Tr longitude:</div>
<div class="t" style="left:1749.3px;top:633.7px;letter-spacing:-0.07px;">312.282 °</div>
<div class="a" style="left:1461px;top:665px;width:395px;height:1px;background:#dcdcdc"></div>
<div class="btn" style="left:1462px;top:673px;width:73px;height:21px">&lt;&lt; Done</div>
<div class="btn" style="left:1627px;top:673px;width:73px;height:21px;border:2px solid #0078d7;line-height:17px">Apply</div>
<div class="btn" style="left:1705px;top:673px;width:73px;height:21px">Refresh</div>
<div class="btn" style="left:1782px;top:673px;width:73px;height:21px">Help</div>
<!-- /DIALOG -->

</body></html>
